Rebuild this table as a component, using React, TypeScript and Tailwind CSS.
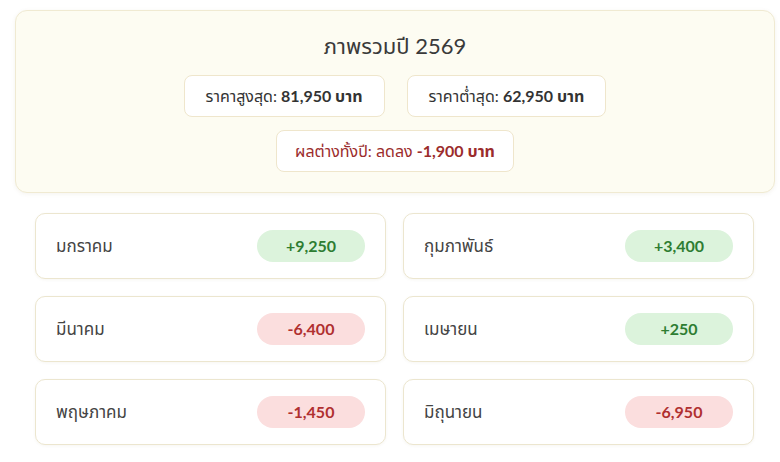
import React from 'react';

type Month = { name: string; diff: number };

const months: Month[] = [
  { name: 'มกราคม', diff: 9250 },
  { name: 'กุมภาพันธ์', diff: 3400 },
  { name: 'มีนาคม', diff: -6400 },
  { name: 'เมษายน', diff: 250 },
  { name: 'พฤษภาคม', diff: -1450 },
  { name: 'มิถุนายน', diff: -6950 },
];

const fmt = (n: number) => (n > 0 ? '+' : n < 0 ? '-' : '') + Math.abs(n).toLocaleString('en-US');

const MonthCard = ({ m }: { m: Month }) => {
  const up = m.diff >= 0;
  return (
    <div className="flex h-[66px] items-center justify-between rounded-[10px] border border-[#ece6cf] bg-white px-5 shadow-[0_1px_3px_rgba(120,100,40,0.06)]">
      <span className="text-[17px] text-[#444]">{m.name}</span>
      <span
        className={`flex h-[32px] w-[108px] items-center justify-center rounded-full text-[16px] font-bold ${
          up ? 'bg-[#dcf3dc] text-[#2e7d32]' : 'bg-[#fbdede] text-[#b03030]'
        }`}
      >
        {fmt(m.diff)}
      </span>
    </div>
  );
};

export default function App() {
  return (
    <div
      className="min-h-[462px] bg-white pl-[15px] pt-[10px]"
      style={{ fontFamily: 'Lato, "Noto Sans Thai", "Noto Sans", sans-serif' }}
    >
      <div className="w-[760px] rounded-[12px] border border-[#f0ead2] bg-[#fdfcf2] pb-5 pt-[20px] shadow-[0_1px_4px_rgba(120,100,40,0.08)]">
        <h2 className="text-center text-[22px] leading-[30px] text-[#3a3a3a]">ภาพรวมปี 2569</h2>
        <div className="mt-[14px] flex justify-center gap-[22px]">
          <div className="flex h-[42px] items-center rounded-[8px] border border-[#efe6cc] bg-white px-[21px] text-[16px] text-[#333]">
            ราคาสูงสุด:&nbsp;<b>81,950 บาท</b>
          </div>
          <div className="flex h-[42px] items-center rounded-[8px] border border-[#efe6cc] bg-white px-[21px] text-[16px] text-[#333]">
            ราคาต่ำสุด:&nbsp;<b>62,950 บาท</b>
          </div>
        </div>
        <div className="mt-[13px] flex justify-center">
          <div className="flex h-[42px] items-center rounded-[8px] border border-[#efe6cc] bg-white px-[18px] text-[16px] text-[#9b2c2c]">
            ผลต่างทั้งปี: ลดลง&nbsp;<b>-1,900 บาท</b>
          </div>
        </div>
      </div>
      <div className="ml-5 mt-5 grid w-[719px] grid-cols-2 gap-[17px]">
        {months.map((m) => (
          <MonthCard key={m.name} m={m} />
        ))}
      </div>
    </div>
  );
}
